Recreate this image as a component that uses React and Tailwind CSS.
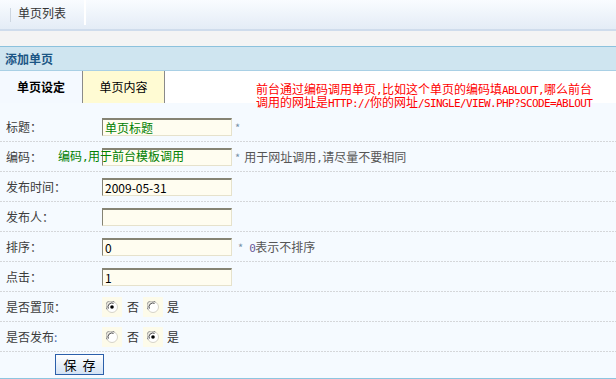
import React from "react";

const font = { fontFamily: '"Noto Sans CJK SC", "Noto Sans", sans-serif' };
const mono = "inline-block leading-[13px] font-['DejaVu_Sans_Mono',monospace] text-[11px] tracking-[-0.62px]";

function Radio({ checked }) {
  return (
    <span className="w-[20px] h-[20px] bg-[#fdfbea] flex items-center justify-center">
      <svg width="12" height="12" viewBox="0 0 12 12">
        <circle cx="6" cy="6" r="5.5" fill="#fff" stroke="#d6d3c8" />
        <path d="M1.2 8.5 A5 5 0 0 1 8.5 1.2" fill="none" stroke="#8a8a8a" strokeWidth="1" />
        <path d="M2.3 7.6 A4 4 0 0 1 7.6 2.3" fill="none" stroke="#404040" strokeWidth="1" />
        {checked && <circle cx="6" cy="6" r="1.8" fill="#000" />}
      </svg>
    </span>
  );
}

function Input({ value, color = "text-black" }) {
  return (
    <div className={`w-[130px] h-[18px] bg-[#fffdf0] border-t-2 border-l border-t-[#858373] border-l-[#858373] border-r border-b border-r-[#e6e2cc] border-b-[#e6e2cc] pl-[2px] text-[12px] leading-[15px] ${color}`}>
      {value}
    </div>
  );
}

const rowCls =
  "relative flex items-center h-[30px] bg-[linear-gradient(to_right,#b4b4b4_1px,transparent_1px)] bg-[length:3px_1px] bg-repeat-x bg-bottom";

function Row({ label, children }) {
  return (
    <div className={rowCls}>
      <div className="w-[102px] pl-[6px] text-[12px] text-[#3c3c3c]">{label}</div>
      {children}
    </div>
  );
}

export default function App() {
  return (
    <div className="w-[616px] h-[379px] bg-white overflow-hidden" style={font}>
      {/* top bar */}
      <div className="h-[31px] bg-gradient-to-b from-[#f9fcff] to-[#e4ecf6] border-b-2 border-[#cfdcec] flex items-stretch">
        <div className="ml-[10px] mt-[8px] h-[14px] w-px bg-[#cdd6e0]" />
        <div className="pl-[7px] pr-[18px] flex items-center text-[12px] text-[#333] border-r-2 border-white h-[25px]">
          单页列表
        </div>
      </div>
      <div className="h-[15px] bg-[#f4f4f4]" />
      {/* header */}
      <div className="h-[25px] bg-[#cfe5f0] border-t border-[#8cc2dd] border-b border-b-[#a9d0e5] flex items-center pl-[5px] text-[12px] font-bold text-[#1b5685]">
        添加单页
      </div>
      {/* tabs */}
      <div className="h-[32px] flex bg-white">
        <div className="w-[83px] bg-[#f4f9ff] border-r border-[#8a8a8a] flex items-center justify-center text-[12px] font-bold text-black">
          单页设定
        </div>
        <div className="w-[82px] bg-[#fffbd3] border-r border-[#8a8a8a] flex items-center justify-center text-[12px] text-black">
          单页内容
        </div>
        <div className="pl-[91px] pt-[11px] text-[12px] leading-[13px] text-[#ff0000] whitespace-nowrap relative z-10 flex flex-col">
          <div className="h-[13px]">
            前台通过编码调用单页<span className={mono}>,</span>比如这个单页的编码填<span className={mono}>ABLOUT,</span>哪么前台
          </div>
          <div className="h-[13px]">
            调用的网址是<span className={mono}>HTTP://</span>你的网址<span className={mono}>/SINGLE/VIEW.PHP?SCODE=ABLOUT</span>
          </div>
        </div>
      </div>
      {/* body */}
      <div className="h-[276px] bg-[#f5faff] border-b border-[#8ec5e0] pt-[9px] flex flex-col">
        <Row label="标题：">
          <Input value="单页标题" color="text-[#008000]" />
          <span className="ml-[3px] text-[11px] text-[#7890a8]">*</span>
        </Row>
        <Row label="编码：">
          <Input value="" />
          <span className="absolute left-[58px] top-[6px] text-[12px] leading-[15px] text-[#008000]">
            编码<span className={mono}>,</span>用于前台模板调用
          </span>
          <span className="ml-[3px] text-[11px] text-[#7890a8]">*</span>
          <span className="ml-[4px] text-[12px] text-[#555]">
            用于网址调用<span className={mono}>,</span>请尽量不要相同
          </span>
        </Row>
        <Row label="发布时间：">
          <Input value="2009-05-31" />
        </Row>
        <Row label="发布人：">
          <Input value="" />
        </Row>
        <Row label="排序：">
          <Input value="0" />
          <span className="ml-[6px] text-[11px] text-[#7890a8]">*</span>
          <span className="ml-[6px] text-[12px] text-[#555]">
            <span className={`${mono} text-[#6a5a9a]`}>0</span>表示不排序
          </span>
        </Row>
        <Row label="点击：">
          <Input value="1" />
        </Row>
        <Row label="是否置顶：">
          <div className="flex items-center text-[12px] text-[#333]">
            <Radio checked />
            <span className="ml-[5px] mr-[4px]">否</span>
            <Radio />
            <span className="ml-[4px]">是</span>
          </div>
        </Row>
        <Row label={<>是否发布<span className="text-[#4a6ab0]">:</span></>}>
          <div className="flex items-center text-[12px] text-[#333]">
            <Radio />
            <span className="ml-[5px] mr-[4px]">否</span>
            <Radio checked />
            <span className="ml-[4px]">是</span>
          </div>
        </Row>
        <div className="flex items-center h-[25px] pl-[55px]">
          <button className="w-[49px] h-[21px] border border-[#2b5faa] bg-gradient-to-b from-white to-[#d3e2f4] text-[13px] leading-[19px] text-black flex items-center justify-center">
            <span>保</span>
            <span className="ml-[6px]">存</span>
          </button>
        </div>
      </div>
    </div>
  );
}
